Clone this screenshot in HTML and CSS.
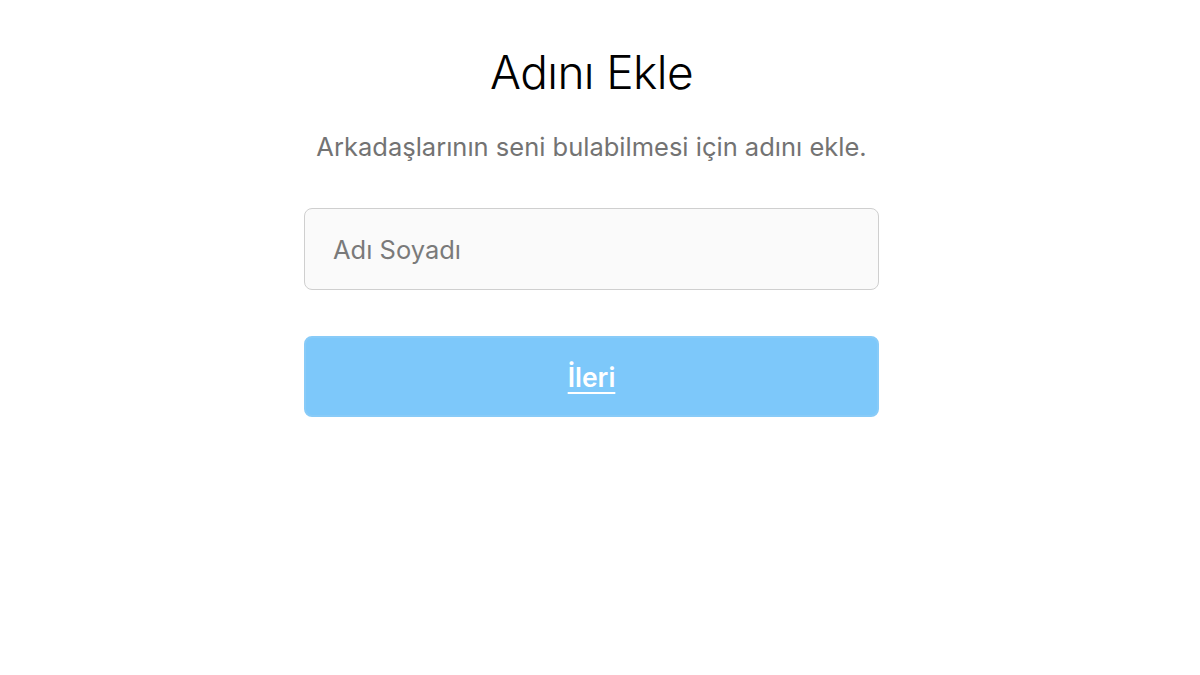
FILE: index.html
```html
<!DOCTYPE html>
<html lang="tr">
<head>
<meta charset="UTF-8">
<meta name="viewport" content="width=device-width, initial-scale=1.0">
<title>Adını Ekle</title>
<link rel="stylesheet" href="styles.css">
</head>
<body>

<div class="name-form">
    <h1 class="form-title">Adını Ekle</h1>
    <p class="form-hint">Arkadaşlarının seni bulabilmesi için adını ekle.</p>
    <input class="name-input" type="text" placeholder="Adı Soyadı">
    <a class="next-button" href="#">İleri</a>
</div>

</body>
</html>
```

FILE: styles.css
```css
body {
    font-family: Inter, "Noto Sans", sans-serif;
    background-color: #fff;
    margin: 0;
    padding: 0 17px 0 0;
}
.name-form {
    width: 575px;
    margin: 0 auto;
    padding-top: 44px;
    display: flex;
    flex-direction: column;
    align-items: stretch;
}
.form-title {
    margin: 0;
    text-align: center;
    font-size: 46px;
    font-weight: 300;
    line-height: 56px;
    color: #000;
    letter-spacing: -0.6px;
}
.form-hint {
    margin: 31px 0 0;
    text-align: center;
    font-size: 25.5px;
    line-height: 32px;
    color: #737373;
    white-space: nowrap;
}
.name-input {
    margin-top: 45px;
    height: 82px;
    box-sizing: border-box;
    padding: 0 28px;
    border: 1px solid #cfcfcf;
    border-radius: 8px;
    background-color: #fafafa;
    font-family: inherit;
    font-size: 25.5px;
    color: #262626;
    outline: none;
}
.name-input::placeholder {
    color: #7a7a7a;
}
.next-button {
    margin-top: 46px;
    height: 81px;
    box-sizing: border-box;
    display: flex;
    justify-content: center;
    align-items: center;
    border: 2px solid #88cbf8;
    border-radius: 8px;
    background-color: #7dc8fa;
    color: #fff;
    font-size: 26.5px;
    font-weight: 600;
    text-decoration: underline;
    text-underline-offset: 5px;
}
```
